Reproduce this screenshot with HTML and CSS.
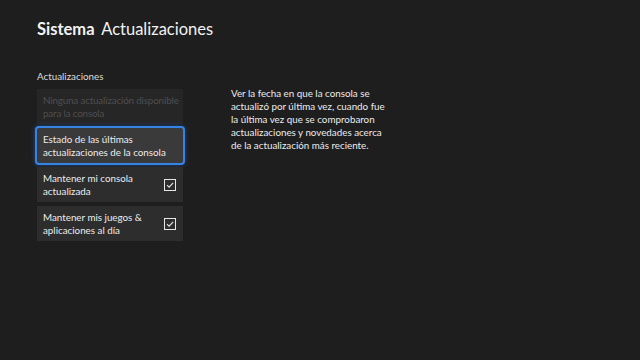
FILE: index.html
```html
<!DOCTYPE html>
<html lang="es">
<head>
  <meta charset="UTF-8" />
  <title>Sistema Actualizaciones</title>
  <link rel="stylesheet" href="styles.css">
</head>
<body>
  <div class="page">
    <h1 class="title"><b>Sistema</b> Actualizaciones</h1>
    <div class="content">
      <div class="menu">
        <div class="section-label">Actualizaciones</div>
        <div class="item disabled"><span>Ninguna actualización disponible<br>para la consola</span></div>
        <div class="item focused">Estado de las últimas actualizaciones de la consola</div>
        <div class="item">
          <span>Mantener mi consola actualizada</span>
          <svg class="check" viewBox="0 0 12 12" width="12" height="12">
            <rect x="0.5" y="0.5" width="11" height="11" fill="none" stroke="#e6e6e6" stroke-width="1"/>
            <path d="M3 6.2 L5.1 8.2 L9.2 3.8" fill="none" stroke="#e6e6e6" stroke-width="1.1"/>
          </svg>
        </div>
        <div class="item">
          <span>Mantener mis juegos &amp; aplicaciones al día</span>
          <svg class="check" viewBox="0 0 12 12" width="12" height="12">
            <rect x="0.5" y="0.5" width="11" height="11" fill="none" stroke="#e6e6e6" stroke-width="1"/>
            <path d="M3 6.2 L5.1 8.2 L9.2 3.8" fill="none" stroke="#e6e6e6" stroke-width="1.1"/>
          </svg>
        </div>
      </div>
      <p class="description">Ver la fecha en que la consola se actualizó por última vez, cuando fue la última vez que se comprobaron actualizaciones y novedades acerca de la actualización más reciente.</p>
    </div>
  </div>
</body>
</html>
```

FILE: styles.css
```css
body {
  margin: 0;
  background: #1e1e1e;
  color: #e8e8e8;
  font-family: Lato, "Noto Sans", sans-serif;
  width: 640px;
  height: 360px;
  overflow: hidden;
}
.page {
  padding: 16px 0 0 37px;
}
.title {
  margin: 0;
  font-size: 16.5px;
  font-weight: 400;
  line-height: 26px;
  color: #f2f2f2;
}
.title b {
  font-weight: 700;
  margin-right: 3px;
}
.content {
  display: flex;
  margin-top: 27px;
}
.menu {
  width: 146px;
  display: flex;
  flex-direction: column;
  gap: 4px;
}
.section-label {
  font-size: 9.8px;
  line-height: 14px;
  color: #dcdcdc;
  margin-bottom: 2px;
}
.item {
  box-sizing: border-box;
  height: 35px;
  padding: 4px 6px;
  background: #2d2d2d;
  font-size: 9.8px;
  line-height: 13px;
  color: #ececec;
  display: flex;
  align-items: center;
  justify-content: space-between;
}
.item span {
  width: 112px;
}
.item.disabled {
  background: #262626;
  color: #4e4e4e;
  white-space: nowrap;
  letter-spacing: -0.15px;
}
.item.focused {
  background: #3a3a3a;
  border-radius: 2px;
  outline: 2px solid #3584e4;
  outline-offset: 0;
  box-shadow: 0 0 5px 2px rgba(40, 120, 230, 0.45);
}
.check {
  margin-right: 1px;
}
.description {
  margin: 18px 0 0 48px;
  width: 160px;
  font-size: 9.8px;
  line-height: 13px;
  color: #ececec;
}
```
